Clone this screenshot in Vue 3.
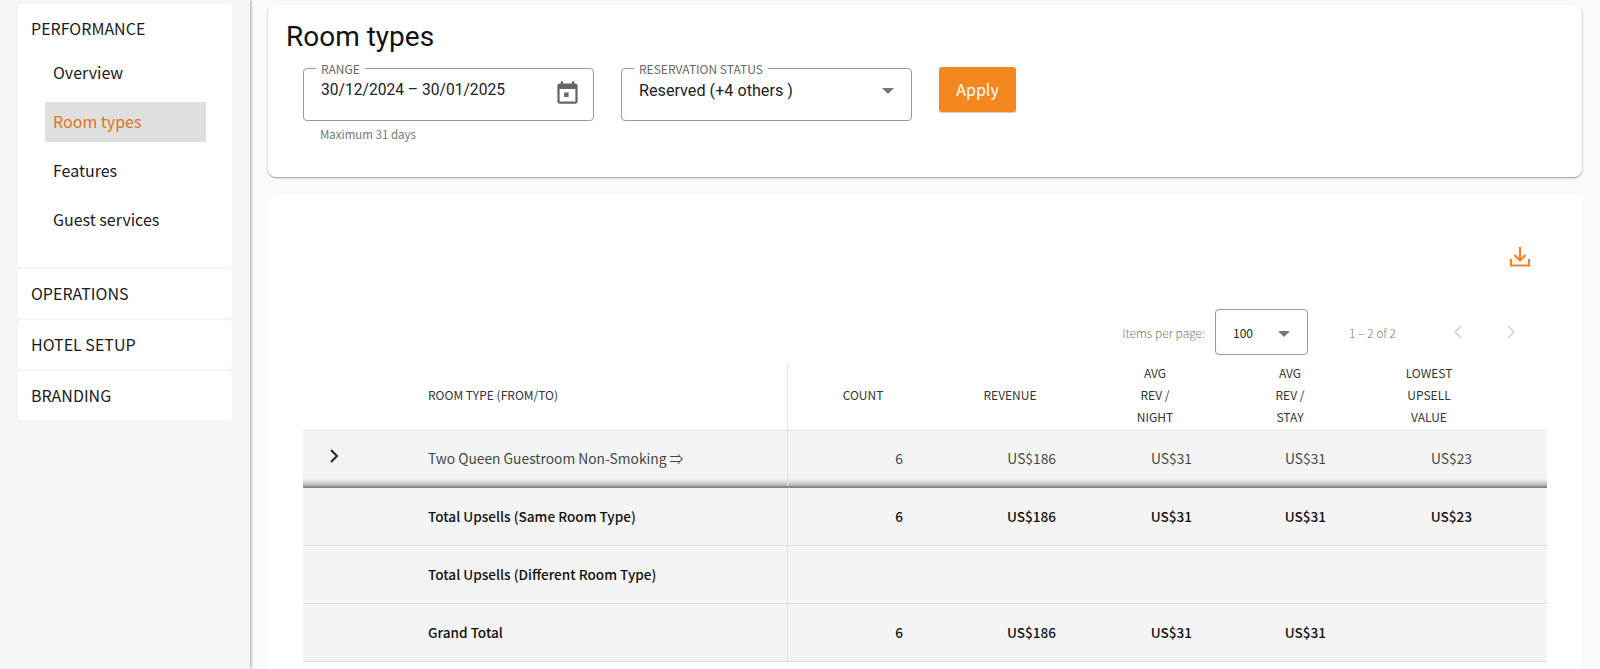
<script setup>
const nav = ['Overview', 'Room types', 'Features', 'Guest services']
const sections = ['OPERATIONS', 'HOTEL SETUP', 'BRANDING']
const heads = [['COUNT'], ['REVENUE'], ['AVG', 'REV /', 'NIGHT'], ['AVG', 'REV /', 'STAY'], ['LOWEST', 'UPSELL', 'VALUE']]
const rows = [
  { label: 'Total Upsells (Same Room Type)', vals: ['6', 'US$186', 'US$31', 'US$31', 'US$23'] },
  { label: 'Total Upsells (Different Room Type)', vals: ['', '', '', '', ''] },
  { label: 'Grand Total', vals: ['6', 'US$186', 'US$31', 'US$31', ''] },
]
const first = ['6', 'US$186', 'US$31', 'US$31', 'US$23']
</script>

<template>
  <div class="page">
    <aside class="side">
      <div class="sec first">
        <div class="sec-title">PERFORMANCE</div>
        <div v-for="n in nav" :key="n" class="nav-item" :class="{ active: n === 'Room types' }">{{ n }}</div>
      </div>
      <div v-for="s in sections" :key="s" class="sec small"><div class="sec-title">{{ s }}</div></div>
    </aside>
    <main class="main">
      <section class="card filter">
        <h1>Room types</h1>
        <div class="controls">
          <div class="field-wrap">
            <div class="field">
              <span class="legend">RANGE</span>
              <span class="value date">30/12/2024 – 30/01/2025</span>
              <svg class="cal" viewBox="0 0 24 24" width="27" height="27"><path fill="#666" d="M19 3h-1V1h-2v2H8V1H6v2H5c-1.11 0-1.99.9-1.99 2L3 19c0 1.1.89 2 2 2h14c1.1 0 2-.9 2-2V5c0-1.1-.9-2-2-2zm0 16H5V8h14v11zM9 11h4v4H9z"/></svg>
            </div>
            <div class="hint">Maximum 31 days</div>
          </div>
          <div class="field">
            <span class="legend">RESERVATION STATUS</span>
            <span class="value status">Reserved (+4 others )</span>
            <span class="caret"></span>
          </div>
          <button class="apply">Apply</button>
        </div>
      </section>
      <section class="card data">
        <div class="dl">
          <svg viewBox="0 0 24 24" width="24" height="24" fill="none" stroke="#f58220" stroke-width="2.2"><path d="M12 2v13M6.5 10l5.5 5.5 5.5-5.5M3 14v6.5h18V14"/></svg>
        </div>
        <div class="pager">
          <span class="pg-label">Items per page:</span>
          <div class="pg-select"><span>100</span><span class="caret"></span></div>
          <span class="pg-range">1 – 2 of 2</span>
          <svg class="chev" viewBox="0 0 24 24" width="24" height="24" fill="none" stroke="#d9d9d9" stroke-width="2"><path d="M15 6l-6 6 6 6"/></svg>
          <svg class="chev" viewBox="0 0 24 24" width="24" height="24" fill="none" stroke="#d9d9d9" stroke-width="2"><path d="M9 6l6 6-6 6"/></svg>
        </div>
        <div class="table">
          <div class="row head">
            <div></div>
            <div class="name div"><span class="lift">ROOM TYPE (FROM/TO)</span></div>
            <div v-for="(h, i) in heads" :key="i" class="hcell">
              <div v-for="l in h" :key="l">{{ l }}</div>
            </div>
          </div>
          <div class="row body r1">
            <div class="exp">
              <svg viewBox="0 0 24 24" width="24" height="24" fill="none" stroke="#222" stroke-width="2"><path d="M9 6l6 6-6 6"/></svg>
            </div>
            <div class="name div"><span class="cell-text">Two Queen Guestroom Non-Smoking ⇒</span></div>
            <div v-for="(v, i) in first" :key="i" class="num" :class="'c' + i"><span class="cell-text">{{ v }}</span></div>
          </div>
          <div v-for="r in rows" :key="r.label" class="row body total">
            <div></div>
            <div class="name div"><span class="cell-text">{{ r.label }}</span></div>
            <div v-for="(v, i) in r.vals" :key="i" class="num" :class="'c' + i"><span class="cell-text">{{ v }}</span></div>
          </div>
        </div>
      </section>
    </main>
  </div>
</template>

<style>
html, body { margin: 0; height: 100%; overflow: hidden; background: #fafafa; }
</style>

<style scoped>
.page {
  display: flex;
  height: 669px;
  overflow: hidden;
  font-family: "Noto Sans CJK SC", "Noto Sans", sans-serif;
  color: #1a1a1a;
  background: #fafafa;
}
.side {
  width: 250px;
  flex: none;
  box-sizing: border-box;
  padding: 4px 18px 0;
  background: #f5f5f5;
  box-shadow: 1px 0 3px rgba(0, 0, 0, .35);
  display: flex;
  flex-direction: column;
  gap: 2px;
}
.sec { background: #fff; border-radius: 4px; width: 214px; }
.sec.first { height: 263px; box-sizing: border-box; padding-top: 14px; }
.sec.small { height: 49px; box-sizing: border-box; padding-top: 14px; }
.sec-title { padding-left: 13px; font-size: 16px; line-height: 20px; }
.sec.first .sec-title { margin-bottom: 15px; }
.nav-item {
  margin-left: 27px;
  width: 161px;
  height: 40px;
  margin-bottom: 9px;
  box-sizing: border-box;
  padding-left: 8px;
  font-size: 16px;
  line-height: 38px;
}
.nav-item.active { background: #dfdfdf; color: #e0741a; }
.main { flex: 1; padding: 5px 18px 0 18px; min-width: 0; }
.card { background: #fff; border-radius: 8px; }
.filter {
  height: 172px;
  box-sizing: border-box;
  padding: 15px 18px 0;
  box-shadow: 0 1px 2px rgba(0, 0, 0, .4);
  margin-bottom: 18px;
}
h1 {
  margin: 0;
  font: 400 28px/33px Roboto, sans-serif;
  color: #111;
}
.controls { display: flex; align-items: flex-start; gap: 27px; margin: 15px 0 0 17px; }
.field {
  position: relative;
  width: 291px;
  height: 53px;
  box-sizing: border-box;
  border: 1px solid #9a9a9a;
  border-radius: 4px;
  padding: 11px 17px 0;
  display: flex;
  justify-content: space-between;
  font: 400 16px/21px Roboto, sans-serif;
  color: #222;
}
.date { font-size: 15.6px; }
.status { font-size: 16.2px; }
.legend {
  position: absolute;
  top: -7px;
  left: 12px;
  padding: 0 5px;
  background: #fff;
  font: 400 12px/14px "Noto Sans CJK SC", sans-serif;
  color: #666;
}
.cal { margin: 0 -5px 0 0; }
.hint { margin: 5px 0 0 17px; font-size: 11.5px; line-height: 16px; color: #777; }
.caret {
  width: 0;
  height: 0;
  border-left: 6px solid transparent;
  border-right: 6px solid transparent;
  border-top: 6px solid #757575;
}
.field .caret { margin: 8px 0 0 0; }
.apply {
  width: 77px;
  height: 45px;
  margin-top: -1px;
  border: none;
  border-radius: 3px;
  background: #f58720;
  color: #fff;
  font: 400 16px/43px "Noto Sans CJK SC", sans-serif;
  padding: 0;
  box-shadow: 0 1px 1px rgba(0, 0, 0, .2);
}
.data { padding: 0 35px; height: 480px; box-sizing: border-box; }
.dl { display: flex; justify-content: flex-end; padding: 50px 0 0; margin-right: 15px; height: 62px; }
.pager { display: flex; align-items: center; height: 46px; margin-top: 2px; padding-right: 24px; justify-content: flex-end; font-size: 12px; color: #777; font-weight: 300; }
.pg-label { margin-right: 10px; }
.pg-select {
  width: 93px;
  height: 46px;
  box-sizing: border-box;
  border: 1px solid #9a9a9a;
  border-radius: 4px;
  padding: 0 17px;
  display: flex;
  align-items: center;
  justify-content: space-between;
  color: #222;
  font-weight: 400;
  margin-right: 41px;
}
.pg-select .caret { position: relative; top: 2px; }
.pg-range { margin-right: 50px; }
.chev + .chev { margin-left: 29px; }
.row { display: grid; grid-template-columns: 125px 360px 150px 144px 146px 124px 154px 42px; }
.head { height: 67px; margin-top: 8px; font-size: 12px; line-height: 22px; color: #333; }
.head > * { align-self: center; }
.hcell, .lift { position: relative; top: -2px; }
.name { display: flex; align-items: center; height: 100%; border-right: 1px solid #e3e3e3; box-sizing: border-box; }
.hcell { text-align: center; }
.cell-text { position: relative; top: -1px; }
.body { height: 58px; background: #f4f4f4; font-size: 13.6px; line-height: 20px; border-bottom: 1px solid #dcdcdc; box-sizing: border-box; }
.r1 { background: #f3f5f4; color: #444; font-size: 13.8px; box-shadow: inset 0 -8px 6px -6px rgba(0, 0, 0, .4); border-top: 1px solid #e5e5e5; border-bottom: 2px solid #888; }
.total { font-weight: 500; color: #111; }
.num { display: flex; align-items: center; justify-content: flex-end; }
.c0 { padding-right: 35px; }
.c1 { padding-right: 26px; }
.c2 { padding-right: 36px; }
.c3 { padding-right: 26px; }
.c4 { padding-right: 34px; }
.exp { padding: 13px 0 0 19px; }
</style>
